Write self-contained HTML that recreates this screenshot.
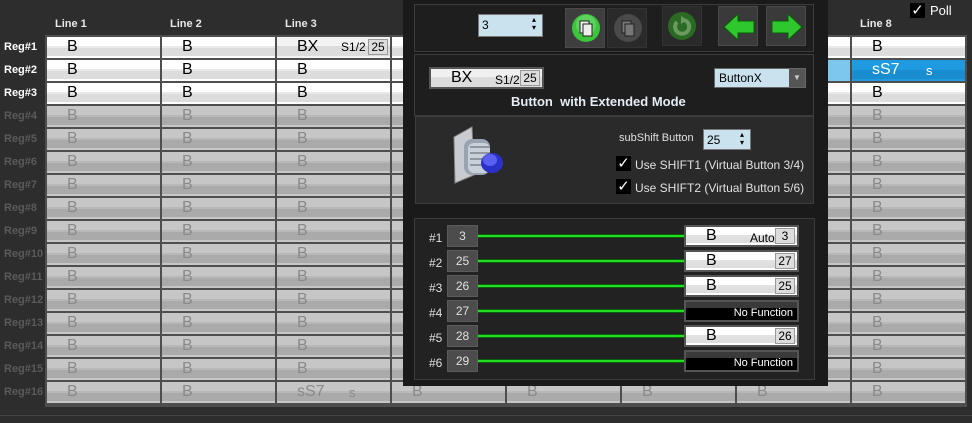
<!DOCTYPE html>
<html><head><meta charset="utf-8"><style>
*{margin:0;padding:0;box-sizing:border-box}
body{width:972px;height:423px;background:#2d2d2d;font-family:"Liberation Sans",sans-serif;position:relative;overflow:hidden;color:#fff}
.hdr{position:absolute;top:18px;font-size:11px;font-weight:bold;color:#e8e8e8}
.lbl{position:absolute;left:4px;font-size:11px;font-weight:bold;color:#fff}
.lbl.d{color:#5a5a5a}
.grid{position:absolute;left:45px;top:35px;width:922px;height:372px;background:#4e4e4e;display:grid;grid-template-columns:repeat(8,113px);grid-auto-rows:21px;gap:2px;padding:2px}
.c{position:relative;background:linear-gradient(#fff 0,#fff 9px,#e9e9e9 9px,#e9e9e9 11px,#dcdcdc 11px,#dcdcdc 19px,#fff 19px);font-size:16px;color:#000;padding-left:20px;line-height:19px}
.c.d{background:linear-gradient(#c6c6c6 0,#c6c6c6 9px,#b8b8b8 9px,#b8b8b8 11px,#aaa 11px,#aaa 19px,#c6c6c6 19px);color:#8a8a8a}
.c.lb{background:#7dc6ec}
.c.bl{background:linear-gradient(#1e9be0 0,#1e9be0 10px,#1a8cd0 10px,#1a8cd0 19px,#1e9be0 19px);color:#fff}
.sm{position:absolute;font-size:12px}
.bx{position:absolute;right:2px;top:2px;width:20px;height:16px;background:#ddd;border:1px solid #999;font-size:12px;line-height:14px;text-align:center;color:#000}
.panel{position:absolute;left:403px;top:0;width:425px;height:386px;background:#1a1a1a}
.sec{position:absolute;border:1px solid #3c3c3c}
.spin{position:absolute;background:#c9e2ee;border:1px solid #777;color:#000;font-size:12px;padding-left:3px;line-height:20px}
.spin:after{content:"▴\A▾";white-space:pre;position:absolute;right:6px;top:1px;font-size:8px;line-height:8px}
.nb{position:absolute;left:447px;width:31px;height:22px;background:#4c4c4c;border:1px solid #5a5a5a;font-size:12px;text-align:center;line-height:20px;color:#e0e0e0}
.hn{position:absolute;left:429px;font-size:12px;color:#e0e0e0}
.gl{position:absolute;left:478px;width:207px;height:4px;background:#22dd22;border-top:1px solid #0a600a;border-bottom:1px solid #0a600a}
.rb{position:absolute;left:684px;width:115px;height:22px;border:2px solid #555;background:linear-gradient(#fff 0,#fff 8px,#e4e4e4 8px,#dcdcdc 16px,#fff 16px);font-size:16px;color:#000;padding-left:20px;line-height:18px}
.rb.nf{background:linear-gradient(#3a3a3a 0,#3a3a3a 6px,#000 6px);color:#fff;font-size:11px;text-align:right;padding-right:4px;line-height:22px}
.rb .bx{top:1px}
.ib{position:absolute;top:6px;width:40px;height:40px;background:#3a3a3a;border:1px solid #4a4a4a}
.ck{position:absolute;width:15px;height:15px;background:#000;font-size:15px;line-height:15px;text-align:center;font-family:"DejaVu Sans",sans-serif}
</style></head><body>
<div class="hdr" style="left:55px">Line 1</div>
<div class="hdr" style="left:170px">Line 2</div>
<div class="hdr" style="left:285px">Line 3</div>
<div class="hdr" style="left:860px">Line 8</div>
<div class="ck" style="left:910px;top:3px">✓</div>
<div style="position:absolute;left:930px;top:3px;font-size:13px">Poll</div>

<div class="lbl" style="top:41px">Reg#1</div>
<div class="lbl" style="top:64px">Reg#2</div>
<div class="lbl" style="top:87px">Reg#3</div>
<div class="lbl d" style="top:110px">Reg#4</div>
<div class="lbl d" style="top:133px">Reg#5</div>
<div class="lbl d" style="top:156px">Reg#6</div>
<div class="lbl d" style="top:179px">Reg#7</div>
<div class="lbl d" style="top:202px">Reg#8</div>
<div class="lbl d" style="top:225px">Reg#9</div>
<div class="lbl d" style="top:248px">Reg#10</div>
<div class="lbl d" style="top:271px">Reg#11</div>
<div class="lbl d" style="top:294px">Reg#12</div>
<div class="lbl d" style="top:317px">Reg#13</div>
<div class="lbl d" style="top:340px">Reg#14</div>
<div class="lbl d" style="top:363px">Reg#15</div>
<div class="lbl d" style="top:386px">Reg#16</div>

<div class="grid">
<div class="c">B</div><div class="c">B</div><div class="c" style="background:linear-gradient(#f2f2f2 0,#f2f2f2 9px,#dcdcdc 9px,#dcdcdc 19px,#f2f2f2 19px)">BX<span class="sm" style="left:64px;top:1px">S1/2</span><span class="bx">25</span></div><div class="c">B</div><div class="c">B</div><div class="c">B</div><div class="c">B</div><div class="c">B</div>
<div class="c">B</div><div class="c">B</div><div class="c">B</div><div class="c">B</div><div class="c">B</div><div class="c">B</div><div class="c lb"></div><div class="c bl">sS7<span class="sm" style="left:74px;top:1px;font-size:13px">s</span></div>
<div class="c">B</div><div class="c">B</div><div class="c">B</div><div class="c">B</div><div class="c">B</div><div class="c">B</div><div class="c">B</div><div class="c">B</div>
<div class="c d">B</div><div class="c d">B</div><div class="c d">B</div><div class="c d">B</div><div class="c d">B</div><div class="c d">B</div><div class="c d">B</div><div class="c d">B</div>
<div class="c d">B</div><div class="c d">B</div><div class="c d">B</div><div class="c d">B</div><div class="c d">B</div><div class="c d">B</div><div class="c d">B</div><div class="c d">B</div>
<div class="c d">B</div><div class="c d">B</div><div class="c d">B</div><div class="c d">B</div><div class="c d">B</div><div class="c d">B</div><div class="c d">B</div><div class="c d">B</div>
<div class="c d">B</div><div class="c d">B</div><div class="c d">B</div><div class="c d">B</div><div class="c d">B</div><div class="c d">B</div><div class="c d">B</div><div class="c d">B</div>
<div class="c d">B</div><div class="c d">B</div><div class="c d">B</div><div class="c d">B</div><div class="c d">B</div><div class="c d">B</div><div class="c d">B</div><div class="c d">B</div>
<div class="c d">B</div><div class="c d">B</div><div class="c d">B</div><div class="c d">B</div><div class="c d">B</div><div class="c d">B</div><div class="c d">B</div><div class="c d">B</div>
<div class="c d">B</div><div class="c d">B</div><div class="c d">B</div><div class="c d">B</div><div class="c d">B</div><div class="c d">B</div><div class="c d">B</div><div class="c d">B</div>
<div class="c d">B</div><div class="c d">B</div><div class="c d">B</div><div class="c d">B</div><div class="c d">B</div><div class="c d">B</div><div class="c d">B</div><div class="c d">B</div>
<div class="c d">B</div><div class="c d">B</div><div class="c d">B</div><div class="c d">B</div><div class="c d">B</div><div class="c d">B</div><div class="c d">B</div><div class="c d">B</div>
<div class="c d">B</div><div class="c d">B</div><div class="c d">B</div><div class="c d">B</div><div class="c d">B</div><div class="c d">B</div><div class="c d">B</div><div class="c d">B</div>
<div class="c d">B</div><div class="c d">B</div><div class="c d">B</div><div class="c d">B</div><div class="c d">B</div><div class="c d">B</div><div class="c d">B</div><div class="c d">B</div>
<div class="c d">B</div><div class="c d">B</div><div class="c d">B</div><div class="c d">B</div><div class="c d">B</div><div class="c d">B</div><div class="c d">B</div><div class="c d">B</div>
<div class="c d">B</div><div class="c d">B</div><div class="c d">sS7<span class="sm" style="left:72px;top:1px;font-size:13px">s</span></div><div class="c d">B</div><div class="c d">B</div><div class="c d">B</div><div class="c d">B</div><div class="c d">B</div>
</div>
<div style="position:absolute;left:0;top:415px;width:972px;height:1px;background:#444"></div>

<div class="panel"></div>
<div class="sec" style="left:414px;top:4px;width:400px;height:48px;background:#1e1e1e"></div>
<div class="spin" style="left:478px;top:14px;width:65px;height:23px">3</div>
<div class="ib" style="left:565px;top:8px;background:#3e3e3e"></div>
<svg style="position:absolute;left:571px;top:13px" width="30" height="30"><circle cx="15" cy="15" r="14" fill="#3cc43c"/><circle cx="15" cy="12" r="10" fill="#7fe07f" opacity=".5"/><rect x="9" y="8" width="9" height="12" fill="#eee" stroke="#222"/><rect x="12" y="11" width="9" height="12" fill="#eee" stroke="#222"/></svg>
<div class="ib" style="left:607px;top:8px;background:#2a2a2a;border-color:#333"></div>
<svg style="position:absolute;left:613px;top:13px" width="30" height="30"><circle cx="15" cy="15" r="14" fill="#4a4a4a"/><rect x="9" y="8" width="9" height="12" fill="#777" stroke="#222"/><rect x="12" y="11" width="9" height="12" fill="#777" stroke="#222"/></svg>
<div class="ib" style="left:662px;top:6px;background:#2a2a2a;border-color:#333"></div>
<svg style="position:absolute;left:667px;top:11px" width="30" height="30"><circle cx="15" cy="15" r="14" fill="#2a6a22"/><path d="M10 11 A7 7 0 1 0 17 9" stroke="#6a9a60" stroke-width="4" fill="none"/><path d="M14 5 L20 9 L14 13Z" fill="#6a9a60"/></svg>
<div class="ib" style="left:718px;top:6px"></div>
<svg style="position:absolute;left:722px;top:12px" width="34" height="30"><path d="M2 15 L16 2 L16 9 L32 9 L32 21 L16 21 L16 28Z" fill="#2ec82e" stroke="#0a5a0a"/></svg>
<div class="ib" style="left:766px;top:6px"></div>
<svg style="position:absolute;left:770px;top:12px" width="34" height="30"><path d="M32 15 L18 2 L18 9 L2 9 L2 21 L18 21 L18 28Z" fill="#2ec82e" stroke="#0a5a0a"/></svg>

<div class="sec" style="left:414px;top:54px;width:400px;height:62px;background:#1e1e1e"></div>
<div style="position:absolute;left:429px;top:67px;width:115px;height:22px;border:2px solid #555;background:linear-gradient(#f0f0f0 0,#f0f0f0 8px,#dcdcdc 8px,#dcdcdc 18px,#f0f0f0 18px);color:#000;font-size:16px;padding-left:20px;line-height:18px">BX<span class="sm" style="left:64px;top:2px">S1/2</span><span class="bx" style="top:1px">25</span></div>
<div style="position:absolute;left:714px;top:68px;width:92px;height:20px;background:#c9e2ee;border:1px solid #666;color:#000;font-size:12px;padding-left:4px;line-height:18px">ButtonX<div style="position:absolute;right:0;top:0;width:16px;height:18px;background:#555;color:#ccc;font-size:8px;text-align:center;line-height:18px">▼</div></div>
<div style="position:absolute;left:511px;top:94px;font-size:13px;font-weight:bold;color:#e4ecf4">Button&nbsp; with Extended Mode</div>

<div class="sec" style="left:415px;top:116px;width:399px;height:88px;background:#2a2a2a"></div>
<svg style="position:absolute;left:450px;top:125px" width="70" height="70"><path d="M4 12 L22 2 L24 50 L5 58Z" fill="#c8ccd0" stroke="#888"/><rect x="14" y="14" width="26" height="36" rx="8" fill="#9aa4b0"/><rect x="18" y="18" width="22" height="30" rx="6" fill="#c8d0d8"/><path d="M20 22h20M20 28h20M20 34h20M20 40h18" stroke="#7a8490" stroke-width="1.5"/><ellipse cx="42" cy="38" rx="11" ry="10" fill="#2a30c8"/><ellipse cx="40" cy="35" rx="7" ry="6" fill="#5a60f0"/></svg>
<div style="position:absolute;left:619px;top:132px;font-size:11px;color:#e0e0e0">subShift Button</div>
<div class="spin" style="left:703px;top:129px;width:48px;height:21px">25</div>
<div class="ck" style="left:616px;top:156px">✓</div>
<div style="position:absolute;left:635px;top:158px;font-size:12px;color:#e0e0e0">Use SHIFT1 (Virtual Button 3/4)</div>
<div class="ck" style="left:616px;top:179px">✓</div>
<div style="position:absolute;left:635px;top:181px;font-size:12px;color:#e0e0e0">Use SHIFT2 (Virtual Button 5/6)</div>

<div class="sec" style="left:414px;top:218px;width:401px;height:162px;background:#222"></div>
<div class="hn" style="top:231px">#1</div><div class="nb" style="top:225px">3</div><div class="gl" style="top:234px"></div>
<div class="rb" style="top:225px">B<span class="sm" style="left:64px;top:2px">Auto</span><span class="bx">3</span></div>
<div class="hn" style="top:256px">#2</div><div class="nb" style="top:250px">25</div><div class="gl" style="top:259px"></div>
<div class="rb" style="top:250px">B<span class="bx">27</span></div>
<div class="hn" style="top:281px">#3</div><div class="nb" style="top:275px">26</div><div class="gl" style="top:284px"></div>
<div class="rb" style="top:275px">B<span class="bx">25</span></div>
<div class="hn" style="top:306px">#4</div><div class="nb" style="top:300px">27</div><div class="gl" style="top:309px"></div>
<div class="rb nf" style="top:300px">No Function</div>
<div class="hn" style="top:331px">#5</div><div class="nb" style="top:325px">28</div><div class="gl" style="top:334px"></div>
<div class="rb" style="top:325px">B<span class="bx">26</span></div>
<div class="hn" style="top:356px">#6</div><div class="nb" style="top:350px">29</div><div class="gl" style="top:359px"></div>
<div class="rb nf" style="top:350px">No Function</div>
</body></html>
